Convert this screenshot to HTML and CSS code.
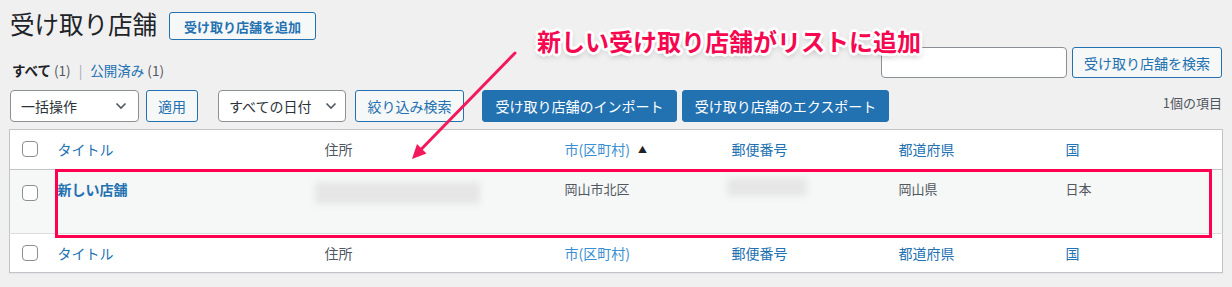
FILE: index.html
```html
<!DOCTYPE html>
<html lang="ja">
<head>
<meta charset="utf-8">
<title>受け取り店舗</title>
<link rel="stylesheet" href="styles.css">
</head>
<body>
<div class="wrap">
  <div class="head">
    <h1 class="title">受け取り店舗</h1>
    <a class="btn btn-add">受け取り店舗を追加</a>
  </div>
  <div class="row-search">
    <ul class="subsubsub">
      <li><b class="current">すべて</b> <span class="count">(1)</span></li>
      <li class="sep">|</li>
      <li><a class="link">公開済み</a> <span class="count">(1)</span></li>
    </ul>
    <div class="search">
      <div class="input"></div>
      <a class="btn btn-search">受け取り店舗を検索</a>
    </div>
  </div>
  <div class="row-controls">
    <div class="select sel-bulk"><span>一括操作</span><svg class="chev" width="12" height="8" viewBox="0 0 12 8"><path d="M1.5 1.5 L6 6 L10.5 1.5" fill="none" stroke="#50575e" stroke-width="1.6"/></svg></div>
    <a class="btn btn-sec btn-apply">適用</a>
    <div class="select sel-date"><span>すべての日付</span><svg class="chev" width="12" height="8" viewBox="0 0 12 8"><path d="M1.5 1.5 L6 6 L10.5 1.5" fill="none" stroke="#50575e" stroke-width="1.6"/></svg></div>
    <a class="btn btn-sec btn-filter">絞り込み検索</a>
    <a class="btn btn-primary btn-import">受け取り店舗のインポート</a>
    <a class="btn btn-primary btn-export">受け取り店舗のエクスポート</a>
    <span class="items">1個の項目</span>
  </div>
  <table class="list">
    <colgroup>
      <col class="c-cb"><col class="c-title"><col class="c-addr"><col class="c-n"><col class="c-n"><col class="c-n"><col class="c-n">
    </colgroup>
    <thead>
      <tr>
        <th class="cb"><span class="check"></span></th>
        <th><a class="link">タイトル</a></th>
        <th class="plain">住所</th>
        <th><a class="link sorted">市(区町村)</a><span class="arrow-up">▲</span></th>
        <th><a class="link">郵便番号</a></th>
        <th><a class="link">都道府県</a></th>
        <th><a class="link">国</a></th>
      </tr>
    </thead>
    <tbody>
      <tr class="data">
        <td class="cb"><span class="check"></span></td>
        <td><a class="row-title">新しい店舗</a></td>
        <td><div class="blur blur-addr"></div></td>
        <td>岡山市北区</td>
        <td><div class="blur blur-zip"></div></td>
        <td>岡山県</td>
        <td>日本</td>
      </tr>
    </tbody>
    <tfoot>
      <tr>
        <th class="cb"><span class="check"></span></th>
        <th><a class="link">タイトル</a></th>
        <th class="plain">住所</th>
        <th><a class="link sorted">市(区町村)</a></th>
        <th><a class="link">郵便番号</a></th>
        <th><a class="link">都道府県</a></th>
        <th><a class="link">国</a></th>
      </tr>
    </tfoot>
  </table>
</div>

<div class="highlight"></div>
<svg class="arrow" width="1232" height="287" viewBox="0 0 1232 287">
  <line x1="515" y1="53" x2="421" y2="149.5" stroke="#f2195c" stroke-width="3" stroke-linecap="round"/>
  <polygon points="412,159 426.5,153.5 417,144" fill="#f2195c"/>
</svg>
<div class="note">新しい受け取り店舗がリストに追加</div>
</body>
</html>
```

FILE: styles.css
```css
* { box-sizing: border-box; }
html, body { margin: 0; padding: 0; }
body {
  background: #f0f0f1;
  font-family: "Noto Sans CJK JP", "Noto Sans", sans-serif;
  font-size: 13px;
  color: #3c434a;
  width: 1232px;
  height: 287px;
  overflow: hidden;
  position: relative;
}
.wrap { padding: 8px 10px 0 10px; }

.head { display: flex; align-items: flex-start; height: 32px; }
.title {
  margin: 0;
  font-size: 24.5px;
  font-weight: 400;
  line-height: 32px;
  color: #1d2327;
}
.btn {
  display: inline-flex;
  align-items: center;
  justify-content: center;
  border: 1px solid #2271b1;
  border-radius: 3px;
  color: #2271b1;
  background: #f6f7f7;
  white-space: nowrap;
  text-decoration: none;
}
.btn-add {
  margin: 4px 0 0 12px;
  width: 147px;
  height: 28px;
  font-size: 13px;
  font-weight: 700;
}

.row-search {
  display: flex;
  justify-content: space-between;
  align-items: flex-start;
  margin-top: 7px;
}
.subsubsub {
  list-style: none;
  margin: 0;
  padding: 13px 0 0 2px;
  display: flex;
  gap: 8px;
  line-height: 20px;
  font-size: 13.5px;
}
.subsubsub .current { color: #1d2327; font-weight: 700; }
.count { color: #50575e; }
.sep { color: #a7aaad; }
.link { color: #2271b1; text-decoration: none; }

.search { display: flex; gap: 5px; }
.input {
  width: 186px;
  height: 31px;
  background: #fff;
  border: 1px solid #8c8f94;
  border-radius: 4px;
}
.btn-search {
  width: 150px;
  height: 31px;
  font-size: 14px;
}

.row-controls {
  display: flex;
  align-items: flex-start;
  margin-top: 10px;
  height: 32px;
}
.select {
  display: flex;
  align-items: center;
  justify-content: space-between;
  height: 32px;
  background: #fff;
  border: 1px solid #8c8f94;
  border-radius: 4px;
  color: #2c3338;
  font-size: 14px;
}
.sel-bulk { width: 129px; padding: 0 11px 0 10px; }
.sel-date { width: 128px; padding: 0 8px 0 10px; margin-left: 20px; }
.btn-sec {
  height: 32px;
  font-size: 14px;
  margin-left: 7px;
}
.btn-apply { width: 52px; }
.btn-filter { margin-left: 9px; width: 109px; }
.btn-primary {
  height: 32px;
  font-size: 14px;
  color: #fff;
  background: #2271b1;
  margin-left: 5px;
}
.btn-import { margin-left: 18px; width: 195px; }
.btn-export { width: 207px; }
.items {
  margin-left: auto;
  padding-top: 3px;
  line-height: 20px;
  color: #50575e;
  font-size: 13px;
}

.list {
  margin-top: 7px;
  margin-left: -1px;
  width: 1213px;
  border-collapse: collapse;
  table-layout: fixed;
  background: #fff;
  border: 1px solid #c3c4c7;
  box-shadow: 0 1px 1px rgba(0,0,0,.04);
}
.c-cb { width: 38px; }
.c-title { width: 267px; }
.c-addr { width: 240px; }
.c-n { width: 167px; }
.list th, .list td {
  text-align: left;
  font-weight: 400;
  vertical-align: top;
  padding: 8px 10px;
  line-height: 22px;
  font-size: 14px;
}
.list thead th { border-bottom: 1px solid #c3c4c7; }
.list tfoot th { border-top: 1px solid #dcdcde; }
.list th.plain { color: #50575e; }
.list th.cb, .list td.cb { padding: 12px 0 0 12px; }
.list thead th.cb, .list tfoot th.cb { padding-top: 11px; }
.check {
  display: block;
  width: 16px;
  height: 16px;
  border: 1px solid #8c8f94;
  border-radius: 4px;
  background: #fff;
}
.sorted { color: #3a8fd1; }
.arrow-up { font-size: 9px; color: #1d2327; margin-left: 8px; vertical-align: 2px; }

.data td {
  background: #f6f7f7;
  height: 64px;
  padding-top: 8px;
  color: #50575e;
  font-size: 13px;
}
.data td.cb { padding-top: 15px; }
.row-title { color: #2271b1; font-weight: 700; font-size: 14px; text-decoration: none; }
.blur { background: #e6e6e6; filter: blur(3px); }
.blur-addr { margin: 4px 0 0 -10px; width: 165px; height: 22px; }
.blur-zip { margin: 0 0 0 -5px; width: 80px; height: 18px; }

.highlight {
  position: absolute;
  left: 55px;
  top: 169px;
  width: 1157px;
  height: 69px;
  border: 3px solid #ff0050;
}
.arrow { position: absolute; left: 0; top: 0; pointer-events: none; }
.note {
  position: absolute;
  left: 537px;
  top: 25px;
  font-size: 24px;
  line-height: 32px;
  font-weight: 700;
  color: #f5084f;
  white-space: nowrap;
  text-shadow:
    2px 0 0 #fff, -2px 0 0 #fff, 0 2px 0 #fff, 0 -2px 0 #fff,
    2px 2px 0 #fff, -2px 2px 0 #fff, 2px -2px 0 #fff, -2px -2px 0 #fff,
    3px 0 0 #fff, -3px 0 0 #fff, 0 3px 0 #fff, 0 -3px 0 #fff,
    0 3px 6px rgba(0,0,0,.35);
}
```
